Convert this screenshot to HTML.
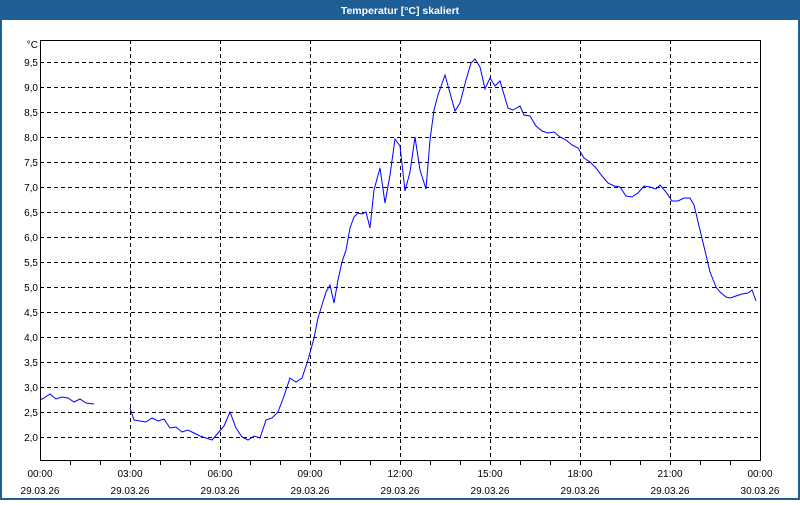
<!DOCTYPE html>
<html><head><style>
body{margin:0;width:800px;height:500px;overflow:hidden;background:#fff;font-family:"Liberation Sans",sans-serif}
</style></head><body>
<svg width="800" height="500" xmlns="http://www.w3.org/2000/svg" font-family="Liberation Sans, sans-serif" font-size="10">
<rect x="0" y="0" width="800" height="500" fill="#1f5f96"/>
<rect x="2" y="20" width="796" height="478" fill="#fff"/>
<text x="400" y="14" fill="#fff" font-weight="bold" text-anchor="middle" font-size="10.5">Temperatur [°C] skaliert</text>
<g stroke="#000" stroke-dasharray="4,3" stroke-width="1">
<line x1="130.5" y1="40" x2="130.5" y2="461"/><line x1="220.5" y1="40" x2="220.5" y2="461"/>
<line x1="310.5" y1="40" x2="310.5" y2="461"/><line x1="400.5" y1="40" x2="400.5" y2="461"/>
<line x1="490.5" y1="40" x2="490.5" y2="461"/><line x1="580.5" y1="40" x2="580.5" y2="461"/>
<line x1="670.5" y1="40" x2="670.5" y2="461"/>
<line x1="40" y1="62.5" x2="760" y2="62.5"/><line x1="40" y1="87.5" x2="760" y2="87.5"/>
<line x1="40" y1="112.5" x2="760" y2="112.5"/><line x1="40" y1="137.5" x2="760" y2="137.5"/>
<line x1="40" y1="162.5" x2="760" y2="162.5"/><line x1="40" y1="187.5" x2="760" y2="187.5"/>
<line x1="40" y1="212.5" x2="760" y2="212.5"/><line x1="40" y1="237.5" x2="760" y2="237.5"/>
<line x1="40" y1="262.5" x2="760" y2="262.5"/><line x1="40" y1="287.5" x2="760" y2="287.5"/>
<line x1="40" y1="312.5" x2="760" y2="312.5"/><line x1="40" y1="337.5" x2="760" y2="337.5"/>
<line x1="40" y1="362.5" x2="760" y2="362.5"/><line x1="40" y1="387.5" x2="760" y2="387.5"/>
<line x1="40" y1="412.5" x2="760" y2="412.5"/><line x1="40" y1="437.5" x2="760" y2="437.5"/>
</g>
<rect x="40.5" y="40.5" width="720" height="420" fill="none" stroke="#000"/>
<g stroke="#000">
<path d="M70.5 461v4M100.5 461v4M130.5 461v4M160.5 461v4M190.5 461v4M220.5 461v4M250.5 461v4M280.5 461v4M310.5 461v4M340.5 461v4M370.5 461v4M400.5 461v4M430.5 461v4M460.5 461v4M490.5 461v4M520.5 461v4M550.5 461v4M580.5 461v4M610.5 461v4M640.5 461v4M670.5 461v4M700.5 461v4M730.5 461v4"/>
</g>
<g fill="#000" text-anchor="end">
<text x="38" y="48">°C</text>
<text x="38" y="66">9,5</text><text x="38" y="91">9,0</text><text x="38" y="116">8,5</text><text x="38" y="141">8,0</text>
<text x="38" y="166">7,5</text><text x="38" y="191">7,0</text><text x="38" y="216">6,5</text><text x="38" y="241">6,0</text>
<text x="38" y="266">5,5</text><text x="38" y="291">5,0</text><text x="38" y="316">4,5</text><text x="38" y="341">4,0</text>
<text x="38" y="366">3,5</text><text x="38" y="391">3,0</text><text x="38" y="416">2,5</text><text x="38" y="441">2,0</text>
</g>
<g fill="#000" text-anchor="middle">
<text x="40" y="477">00:00</text><text x="40" y="494">29.03.26</text>
<text x="130" y="477">03:00</text><text x="130" y="494">29.03.26</text>
<text x="220" y="477">06:00</text><text x="220" y="494">29.03.26</text>
<text x="310" y="477">09:00</text><text x="310" y="494">29.03.26</text>
<text x="400" y="477">12:00</text><text x="400" y="494">29.03.26</text>
<text x="490" y="477">15:00</text><text x="490" y="494">29.03.26</text>
<text x="580" y="477">18:00</text><text x="580" y="494">29.03.26</text>
<text x="670" y="477">21:00</text><text x="670" y="494">29.03.26</text>
<text x="760" y="477">00:00</text><text x="760" y="494">30.03.26</text>
</g>
<g fill="none" stroke="#0000ff" stroke-width="1">
<polyline points="40,400 44,398 50,394 56,399 62,397 68,398 74,402 80,399 86,403 94,404"/>
<polyline points="130,408 134,420 140,421 146,422 152,418 158,421 164,419 170,428 176,427 182,432 188,430 194,433 200,436 206,438 212,440 218,433 224,426 230,412 236,428 242,437 248,440 254,436 260,438 266,420 272,418 278,412 284,396 290,378 296,382 302,378 308,360 314,338 318,318 322,305 326,292 330,285 334,303 338,280 342,262 346,250 350,228 354,217 358,213 362,214 366,212 370,228 374,190 380,168 385,203 390,175 395,139 400,146 405,191 410,172 415,137 420,170 426,189 430,140 434,110 438,95 445,75 450,93 455,111 460,103 466,80 471,63 475,59 480,67 485,89 490,78 495,86 500,81 508,108 513,110 520,106 524,115 530,116 536,126 542,131 548,133 554,132 560,137 566,140 572,145 578,148 584,158 590,162 596,168 602,176 608,183 614,186 620,187 626,196 632,197 638,193 644,186 650,187 656,189 660,185 666,192 672,201 678,201 684,198 690,198 694,205 700,230 706,255 710,272 716,287 720,292 726,297 730,298 736,296 742,294 748,293 752,290 756,301"/>
</g>
</svg>
</body></html>
